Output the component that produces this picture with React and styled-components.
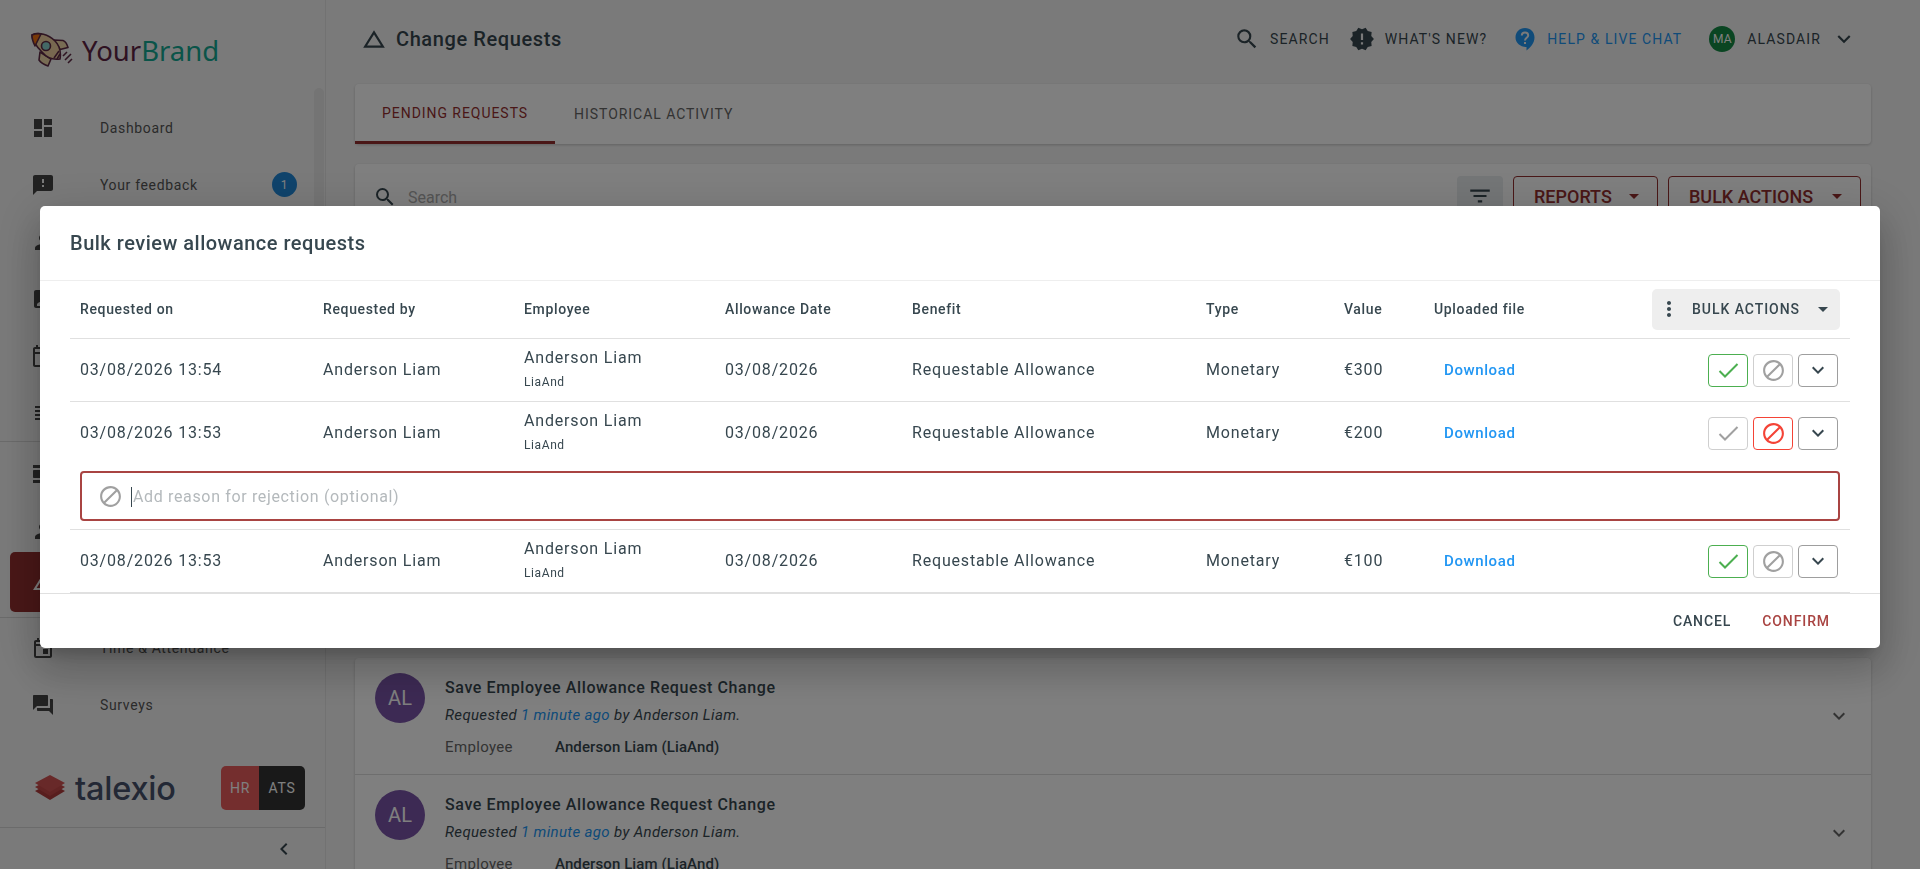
import React from 'react';
import styled, { createGlobalStyle } from 'styled-components';
import {
  MdDashboard, MdFeedback, MdPerson, MdAssignmentInd, MdOutlineCalendarToday, MdSubject,
  MdViewDay, MdChangeHistory, MdOutlineEvent, MdForum, MdChevronLeft, MdSearch, MdNewReleases,
  MdKeyboardArrowDown, MdFilterList, MdArrowDropDown, MdMoreVert, MdBlock,
} from 'react-icons/md';

const RED = '#a94442';
const DIM_RED = '#942f2f';
const TEXT = '#37474f';

const GlobalStyle = createGlobalStyle`
  html, body { margin: 0; padding: 0; height: 100%; overflow: hidden; }
  body { font-family: Roboto, "Liberation Sans", sans-serif; color: ${TEXT}; background: #f5f5f5; }
  * { box-sizing: border-box; }
`;

// Page shell
const Shell = styled.div`
  display: flex;
  height: 100vh;
  overflow: hidden;
`;

// Sidebar
const Sidebar = styled.aside`
  position: relative;
  width: 326px;
  flex: none;
  display: flex;
  flex-direction: column;
  border-right: 1px solid #e4e4e4;
`;

const Logo = styled.div`
  height: 99px;
  padding: 32px 0 0 30px;
  display: flex;
  align-items: flex-start;
  gap: 9px;
`;

const LogoText = styled.span`
  font-family: "Noto Sans", sans-serif;
  font-size: 27.5px;
  line-height: 37px;
  color: #5e2444;
  span { color: #14a892; }
`;

const Scrollbar = styled.div`
  position: absolute;
  top: 88px;
  right: 1px;
  width: 10px;
  height: 340px;
  border-radius: 5px;
  background: #e8e8e8;
`;

const NavGroup = styled.nav`
  padding-top: ${(p) => p.$top || 0}px;
  border-bottom: ${(p) => (p.$line ? '1px solid #d6d6d6' : 'none')};
`;

const NavItem = styled.div`
  height: ${(p) => (p.$active ? 60 : 57)}px;
  margin: ${(p) => (p.$active ? '-7px 13px 5px 10px' : '0')};
  padding-left: ${(p) => (p.$active ? 21 : 31)}px;
  display: flex;
  align-items: center;
  font-size: 14px;
  letter-spacing: 0.65px;
  color: #555;
  background: ${(p) => (p.$active ? DIM_RED : 'transparent')};
  border-radius: ${(p) => (p.$active ? 5 : 0)}px;
  svg { flex: none; font-size: 24px; color: ${(p) => (p.$active ? '#fff' : '#444')}; }
`;

const NavLabel = styled.span`
  margin-left: 45px;
  flex: 1;
`;

const Badge = styled.span`
  width: 25px;
  height: 25px;
  margin-right: 28px;
  border-radius: 50%;
  background: #2088d8;
  color: #fff;
  font-size: 12px;
  display: flex;
  align-items: center;
  justify-content: center;
`;

const SideFooter = styled.div`
  margin-top: auto;
`;

const BrandRow = styled.div`
  height: 66px;
  padding: 0 20px 13px 34px;
  display: flex;
  align-items: center;
  border-bottom: 1px solid #d6d6d6;
`;

const Talexio = styled.span`
  margin-left: 9px;
  font-family: Inter, sans-serif;
  font-weight: 500;
  font-size: 32.5px;
  letter-spacing: -0.2px;
  color: #46506a;
  flex: 1;
`;

const Switcher = styled.div`
  width: 84px;
  height: 44px;
  border-radius: 5px;
  overflow: hidden;
  display: flex;
  font-size: 14px;
  letter-spacing: 0.8px;
  color: #fff;
`;

const SwitchPart = styled.span`
  width: ${(p) => p.$w}px;
  background: ${(p) => p.$bg};
  display: flex;
  align-items: center;
  justify-content: center;
`;

const Collapse = styled.div`
  height: 41px;
  padding-right: 29px;
  display: flex;
  align-items: center;
  justify-content: flex-end;
  font-size: 24px;
  color: #37474f;
`;

// Main column
const Main = styled.main`
  flex: 1;
  min-width: 0;
  padding: 0 49px 0 29px;
`;

const TopBar = styled.header`
  height: 84px;
  padding: 0 14px 6px 6px;
  display: flex;
  align-items: center;
  font-size: 14px;
  letter-spacing: 1.1px;
`;

const PageTitle = styled.h1`
  flex: 1;
  margin: 0;
  display: flex;
  align-items: center;
  gap: 9px;
  font-size: 20px;
  font-weight: 500;
  letter-spacing: 0.6px;
  svg { font-size: 26px; }
`;

const TopLink = styled.span`
  display: flex;
  align-items: center;
  margin-left: ${(p) => p.$gap}px;
  gap: ${(p) => p.$inner}px;
  color: ${(p) => p.$color || TEXT};
  white-space: nowrap;
  svg { font-size: 26px; }
`;

const UserAvatar = styled.span`
  width: 26px;
  height: 26px;
  border-radius: 50%;
  background: #148a45;
  color: #fff;
  font-size: 12px;
  letter-spacing: 0;
  display: flex;
  align-items: center;
  justify-content: center;
`;

const Card = styled.section`
  background: #fff;
  border-radius: 4px;
  box-shadow: 0 1px 3px rgba(0, 0, 0, 0.2);
`;

const TabCard = styled(Card)`
  height: 60px;
  display: flex;
  margin-bottom: 20px;
`;

const Tab = styled.div`
  padding: 0 ${(p) => (p.$active ? 27 : 19)}px;
  display: flex;
  align-items: center;
  font-size: 14px;
  letter-spacing: 0.95px;
  color: ${(p) => (p.$active ? DIM_RED : '#666')};
  border-bottom: ${(p) => (p.$active ? `3px solid ${DIM_RED}` : 'none')};
`;

const SearchCard = styled(Card)`
  height: 70px;
  padding: 12px 10px 0 21px;
  margin-bottom: 424px;
  display: flex;
  align-items: flex-start;
`;

const SearchField = styled.div`
  flex: 1;
  height: 42px;
  display: flex;
  align-items: center;
  gap: 11px;
  font-size: 16px;
  color: #aaa;
  svg { font-size: 24px; color: ${TEXT}; margin-left: -3px; }
`;

const FilterButton = styled.div`
  width: 46px;
  height: 40px;
  margin-right: 10px;
  border-radius: 4px;
  background: #e8ecee;
  display: flex;
  align-items: center;
  justify-content: center;
  font-size: 26px;
`;

const OutlineMenu = styled.div`
  width: ${(p) => p.$w}px;
  height: 40px;
  margin-left: ${(p) => p.$gap || 0}px;
  padding: 0 11px 0 20px;
  border: 1px solid ${DIM_RED};
  border-radius: 4px;
  display: flex;
  align-items: center;
  justify-content: space-between;
  font-size: 18px;
  font-weight: 500;
  color: ${DIM_RED};
  white-space: nowrap;
  svg { font-size: 24px; }
`;

const RequestRow = styled.div`
  height: 117px;
  padding: 15px 20px 0;
  display: flex;
  gap: 20px;
  border-bottom: 1px solid #ddd;
`;

const RowAvatar = styled.div`
  width: 50px;
  height: 50px;
  flex: none;
  border-radius: 50%;
  background: #7a54a8;
  color: #fff;
  font-size: 20px;
  display: flex;
  align-items: center;
  justify-content: center;
`;

const RowBody = styled.div`
  flex: 1;
  padding-top: 1px;
  font-size: 15px;
  letter-spacing: 0.35px;
`;

const RowTitle = styled.div`
  font-size: 16px;
  font-weight: 500;
  letter-spacing: 0.6px;
  line-height: 28px;
`;

const RowSub = styled.div`
  font-style: italic;
  line-height: 27px;
  a { color: #2196f3; }
`;

const RowMeta = styled.div`
  display: flex;
  line-height: 36px;
  span:first-child { width: 110px; color: #666; }
  span:last-child { font-weight: 500; letter-spacing: 0.1px; }
`;

const RowChevron = styled.div`
  align-self: center;
  margin-bottom: 15px;
  font-size: 24px;
  display: flex;
  color: #666;
`;

// Modal
const Overlay = styled.div`
  position: fixed;
  inset: 0;
  padding: 206px 40px 0;
  background: rgba(0, 0, 0, 0.5);
`;

const Modal = styled.div`
  height: 442px;
  background: #fff;
  border-radius: 5px;
  box-shadow: 0 11px 15px -7px rgba(0, 0, 0, 0.2), 0 24px 38px 3px rgba(0, 0, 0, 0.14),
    0 9px 46px 8px rgba(0, 0, 0, 0.12);
`;

const ModalTitle = styled.h2`
  height: 75px;
  margin: 0;
  padding: 0 0 0 30px;
  display: flex;
  align-items: center;
  font-size: 20px;
  font-weight: 500;
  letter-spacing: 0.5px;
  border-bottom: 1px solid #eee;
`;

const Table = styled.div`
  margin: 0 30px;
`;

const GridRow = styled.div`
  height: ${(p) => p.$h}px;
  padding: 0 10px 2px;
  display: grid;
  grid-template-columns: 243px 201px 201px 187px 294px 138px 90px 1fr auto;
  align-items: center;
`;

const HeadRow = styled(GridRow)`
  font-size: 14px;
  font-weight: 500;
  letter-spacing: 0.65px;
  border-bottom: 1px solid #e0e0e0;
`;

const BodyRow = styled(GridRow)`
  font-size: 16px;
  letter-spacing: 0.82px;
  border-bottom: ${(p) => (p.$open ? 'none' : '1px solid #e0e0e0')};
`;

const EmployeeCell = styled.div`
  margin-top: 2px;
  line-height: 24px;
  small {
    display: block;
    font-size: 12px;
    letter-spacing: 0.6px;
    line-height: 24px;
  }
`;

const DownloadLink = styled.a`
  margin-top: 2px;
  padding-left: 10px;
  font-size: 15px;
  font-weight: 500;
  letter-spacing: 0.6px;
  color: #2196f3;
`;

const BulkMenu = styled.div`
  width: 188px;
  height: 41px;
  margin-top: 1px;
  padding: 0 5px;
  border-radius: 5px;
  background: #eee;
  display: flex;
  align-items: center;
  font-size: 14px;
  font-weight: 500;
  letter-spacing: 0.95px;
  white-space: nowrap;
  span { margin: 0 auto 0 11px; }
`;

const Actions = styled.div`
  margin-top: 2px;
  padding-right: 2px;
  display: flex;
  gap: 5px;
`;

const ActionButton = styled.div`
  width: 40px;
  height: 33px;
  border: 1px solid ${(p) => p.$tone};
  border-radius: 4px;
  color: ${(p) => p.$iconTone || p.$tone};
  display: flex;
  align-items: center;
  justify-content: center;
`;

const RejectWrap = styled.div`
  padding: 7px 10px 8px;
  border-bottom: 1px solid #e0e0e0;
`;

const RejectField = styled.div`
  height: 50px;
  padding: 1px 0 0 16px;
  border: 2px solid ${RED};
  border-radius: 4px;
  display: flex;
  align-items: center;
  font-size: 16px;
  letter-spacing: 0.65px;
  color: #b4b9bc;
  svg { color: #a0a0a0; font-size: 25px; margin-right: 8px; }
  i { width: 1px; height: 20px; background: #37474f; margin-right: 1px; }
`;

const ModalFooter = styled.footer`
  height: 55px;
  padding: 0 50px 0 0;
  border-top: 1px solid #e0e0e0;
  display: flex;
  align-items: center;
  justify-content: flex-end;
  gap: 31px;
  font-size: 14px;
  font-weight: 500;
  letter-spacing: 0.9px;
`;

const FooterAction = styled.span`
  color: ${(p) => p.$color || TEXT};
`;

// Drawn marks
const RocketMark = () => (
  <svg width="43" height="36" viewBox="0 0 43 36" fill="none" stroke="#5e2a45" strokeWidth="1.6" strokeLinejoin="round">
    <path d="M24 8l9 .5c2 .6 4 3.5 5 7l-8 2z" fill="#f0d8a8" />
    <path d="M10 20l-1 8c2 3 6 5 9 6l3-7z" fill="#f0d8a8" />
    <path d="M2 3C9 0 18 2 25 9c5 5 6 12 5 18-6 1-13-1-18-7C7 15 2 9 2 3z" fill="#f0d0a0" />
    <path d="M2 3c3-1.400 6-1.700 9-1L5 14C3 10 1.800 6 2 3z" fill="#f07010" />
    <circle cx="16" cy="14" r="4.500" fill="#88d0cc" />
    <path d="M24 26l5-7M27 27l3-5M33 24l4-4M35 28l6-6M38 31l4-4" />
  </svg>
);

const TalexioMark = () => (
  <svg width="32" height="28" viewBox="0 0 32 28">
    <path d="M16 9l15 8-15 9-15-9z" fill="#b03c3c" />
    <path d="M16 5l15 8-15 9-15-9z" fill="#c44848" />
    <path d="M16 1l15 8-15 9-15-9z" fill="#d05252" />
  </svg>
);

const CheckMark = () => (
  <svg width="21" height="17" viewBox="0 0 21 17" fill="none" stroke="currentColor" strokeWidth="2">
    <path d="M1.500 9l5.500 5.500L19.500 2" />
  </svg>
);

// round speech drop with a question mark cut out
const HelpDrop = () => (
  <svg width="26" height="26" viewBox="0 0 26 26">
    <path d="M13 2c5.500 0 9.500 4 9.500 9.500 0 5.500-4 10-8 13v-3.500C8.500 21 3.500 17 3.500 11.500 3.500 6 7.500 2 13 2z" fill="currentColor" />
    <path d="M9.800 9.500c0-1.800 1.400-3 3.200-3s3.200 1.200 3.200 2.900c0 2.300-3.200 2.600-3.200 5" fill="none" stroke="#f5f5f5" strokeWidth="2" />
    <rect x="12" y="16" width="2" height="2" fill="#f5f5f5" />
  </svg>
);

const requests = [
  { on: '03/08/2026 13:54', value: '€300', state: 'pending' },
  { on: '03/08/2026 13:53', value: '€200', state: 'rejected' },
  { on: '03/08/2026 13:53', value: '€100', state: 'pending' },
];

const ReviewRow = ({ on, value, state }) => {
  const rejected = state === 'rejected';
  return (
    <>
      <BodyRow $h={rejected ? 62 : 63} $open={rejected}>
        <div>{on}</div>
        <div>Anderson Liam</div>
        <EmployeeCell>
          Anderson Liam
          <small>LiaAnd</small>
        </EmployeeCell>
        <div>03/08/2026</div>
        <div>Requestable Allowance</div>
        <div>Monetary</div>
        <div>{value}</div>
        <DownloadLink>Download</DownloadLink>
        <Actions>
          <ActionButton $tone={rejected ? '#cfcfcf' : '#4caf50'} $iconTone={rejected ? '#a0a0a0' : '#4caf50'}>
            <CheckMark />
          </ActionButton>
          <ActionButton $tone={rejected ? '#f44336' : '#cfcfcf'} $iconTone={rejected ? '#f44336' : '#a0a0a0'}>
            <MdBlock size={25} />
          </ActionButton>
          <ActionButton $tone="#9e9e9e" $iconTone={TEXT}>
            <MdKeyboardArrowDown size={24} />
          </ActionButton>
        </Actions>
      </BodyRow>
      {rejected && (
        <RejectWrap>
          <RejectField>
            <MdBlock />
            <i />
            Add reason for rejection (optional)
          </RejectField>
        </RejectWrap>
      )}
    </>
  );
};

const ChangeRow = () => (
  <RequestRow>
    <RowAvatar>AL</RowAvatar>
    <RowBody>
      <RowTitle>Save Employee Allowance Request Change</RowTitle>
      <RowSub>
        Requested <a>1 minute ago</a> by Anderson Liam.
      </RowSub>
      <RowMeta>
        <span>Employee</span>
        <span>Anderson Liam (LiaAnd)</span>
      </RowMeta>
    </RowBody>
    <RowChevron>
      <MdKeyboardArrowDown />
    </RowChevron>
  </RequestRow>
);

const App = () => (
  <>
    <GlobalStyle />
    <Shell>
      <Sidebar>
        <Logo>
          <RocketMark />
          <LogoText>
            Your<span>Brand</span>
          </LogoText>
        </Logo>
        <Scrollbar />
        <NavGroup $line>
          <NavItem><MdDashboard /><NavLabel>Dashboard</NavLabel></NavItem>
          <NavItem><MdFeedback /><NavLabel>Your feedback</NavLabel><Badge>1</Badge></NavItem>
          <NavItem><MdPerson /></NavItem>
          <NavItem><MdAssignmentInd /></NavItem>
          <NavItem><MdOutlineCalendarToday /></NavItem>
          <NavItem><MdSubject /></NavItem>
        </NavGroup>
        <NavGroup $line $top={3}>
          <NavItem><MdViewDay /></NavItem>
          <NavItem><MdPerson /></NavItem>
          <NavItem $active><MdChangeHistory /></NavItem>
        </NavGroup>
        <NavGroup $top={1}>
          <NavItem><MdOutlineEvent /><NavLabel>Time &amp; Attendance</NavLabel></NavItem>
          <NavItem><MdForum /><NavLabel>Surveys</NavLabel></NavItem>
        </NavGroup>
        <SideFooter>
          <BrandRow>
            <TalexioMark />
            <Talexio>talexio</Talexio>
            <Switcher>
              <SwitchPart $w={38} $bg="#e85c5c">HR</SwitchPart>
              <SwitchPart $w={46} $bg="#333">ATS</SwitchPart>
            </Switcher>
          </BrandRow>
          <Collapse>
            <MdChevronLeft />
          </Collapse>
        </SideFooter>
      </Sidebar>

      <Main>
        <TopBar>
          <PageTitle>
            <MdChangeHistory />
            Change Requests
          </PageTitle>
          <TopLink $inner={10}><MdSearch />SEARCH</TopLink>
          <TopLink $gap={19} $inner={10}><MdNewReleases />WHAT&apos;S NEW?</TopLink>
          <TopLink $gap={25} $inner={9} $color="#2196f3"><HelpDrop />HELP &amp; LIVE CHAT</TopLink>
          <TopLink $gap={27} $inner={12}><UserAvatar>MA</UserAvatar>ALASDAIR</TopLink>
          <TopLink $gap={10}><MdKeyboardArrowDown /></TopLink>
        </TopBar>
        <TabCard>
          <Tab $active>PENDING REQUESTS</Tab>
          <Tab>HISTORICAL ACTIVITY</Tab>
        </TabCard>
        <SearchCard>
          <SearchField>
            <MdSearch />
            Search
          </SearchField>
          <FilterButton><MdFilterList /></FilterButton>
          <OutlineMenu $w={145}>REPORTS<MdArrowDropDown /></OutlineMenu>
          <OutlineMenu $w={193} $gap={10}>BULK ACTIONS<MdArrowDropDown /></OutlineMenu>
        </SearchCard>
        <Card>
          <ChangeRow />
          <ChangeRow />
        </Card>
      </Main>
    </Shell>

    <Overlay>
      <Modal>
        <ModalTitle>Bulk review allowance requests</ModalTitle>
        <Table>
          <HeadRow $h={58}>
            <div>Requested on</div>
            <div>Requested by</div>
            <div>Employee</div>
            <div>Allowance Date</div>
            <div>Benefit</div>
            <div>Type</div>
            <div>Value</div>
            <div>Uploaded file</div>
            <BulkMenu>
              <MdMoreVert size={24} />
              <span>BULK ACTIONS</span>
              <MdArrowDropDown size={24} />
            </BulkMenu>
          </HeadRow>
          {requests.map((request, index) => (
            <ReviewRow key={index} {...request} />
          ))}
        </Table>
        <ModalFooter>
          <FooterAction>CANCEL</FooterAction>
          <FooterAction $color={RED}>CONFIRM</FooterAction>
        </ModalFooter>
      </Modal>
    </Overlay>
  </>
);

export default App;
